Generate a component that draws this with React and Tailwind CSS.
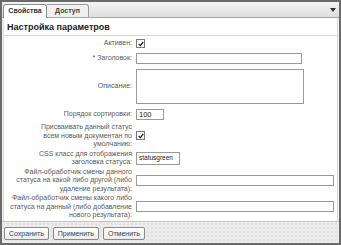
import React from "react";

const Label = ({ children, className = "" }) => (
  <div className={`w-[128px] shrink-0 text-right text-[7px] leading-[8.5px] text-[#5a5a5a] ${className}`}>
    {children}
  </div>
);

const Check = () => (
  <span className="w-[9px] h-[9px] border border-[#7a7a7a] bg-white flex items-center justify-center">
    <svg width="6" height="6" viewBox="0 0 6 6">
      <path d="M0.8 3 L2.4 4.6 L5.2 1" stroke="#222" strokeWidth="1.3" fill="none" />
    </svg>
  </span>
);

const Input = ({ className = "", value = "", small = false }) => (
  <div
    className={`border border-[#9a9a9a] bg-white ${small ? "text-[6.5px]" : "text-[7.5px]"} text-[#222] pl-[2px] flex items-center overflow-hidden whitespace-nowrap ${className}`}
  >
    {value}
  </div>
);

const Button = ({ children }) => (
  <button className="h-[13px] px-[4px] border border-[#8a8a8a] rounded-[2px] bg-gradient-to-b from-white to-[#ececec] text-[7px] leading-[11px] text-[#444]">
    {children}
  </button>
);

export default function App() {
  return (
    <div className="w-[341px] h-[245px] flex flex-col border-2 border-[#6a6a6a] bg-[#f2f2f2] overflow-hidden font-['Liberation_Sans',Arial,sans-serif]">
      {/* Tabs */}
      <div className="relative h-[16px] shrink-0 flex items-end pl-[1px] bg-gradient-to-b from-[#f4f4f4] to-[#dedede] border-b border-[#a8a8a8]">
        <div className="h-[14px] w-[44px] flex items-center justify-center bg-white border border-b-0 border-[#8c8c8c] rounded-t-[3px] text-[7px] font-bold text-[#333] -mb-px">
          Свойства
        </div>
        <div className="h-[13px] w-[42px] flex items-center justify-center bg-[#f0f0f0] border border-l-0 border-b-0 border-[#9c9c9c] rounded-tr-[3px] text-[7px] font-bold text-[#444]">
          Доступ
        </div>
        <svg className="absolute right-[3px] top-[6px]" width="6" height="4" viewBox="0 0 6 4">
          <path d="M0 0 H6 L3 4 Z" fill="#333" />
        </svg>
      </div>

      {/* Content */}
      <div className="flex-1 bg-white border-l border-r border-[#dcdcdc] mx-px flex flex-col">
        <div className="h-[18px] shrink-0 flex items-center pl-[3px] pt-[2px] border-b border-[#d8d8d8] text-[9px] text-[#222] font-bold">
          Настройка параметров
        </div>

        <div className="flex flex-col pt-[3px]">
          <div className="flex items-center gap-[4px] h-[9px]">
            <Label>Активен:</Label>
            <Check />
          </div>
          <div className="flex items-center gap-[4px] mt-[5px]">
            <Label>* Заголовок:</Label>
            <Input className="w-[166px] h-[11px]" />
          </div>
          <div className="flex items-center gap-[4px] mt-[5px]">
            <Label>Описание:</Label>
            <Input className="w-[168px] h-[35px]" />
          </div>
          <div className="flex items-center gap-[4px] mt-[5px]">
            <Label>Порядок сортировки:</Label>
            <Input className="w-[28px] h-[11px]" value="100" />
          </div>
          <div className="flex items-center gap-[4px] mt-[3px]">
            <Label>
              Присваивать данный статус
              <br />
              всем новым документан по
              <br />
              умолчанию:
            </Label>
            <Check />
          </div>
          <div className="flex items-center gap-[4px] mt-[1px]">
            <Label>
              CSS класс для отображения
              <br />
              заголовка статуса:
            </Label>
            <Input className="w-[44px] h-[13px]" value="statusgreen" small />
          </div>
          <div className="flex items-center gap-[4px] mt-[1px]">
            <Label>
              Файл-обработчик смены данного
              <br />
              статуса на какой либо другой (либо
              <br />
              удаление результата):
            </Label>
            <Input className="w-[198px] h-[11px]" />
          </div>
          <div className="flex items-center gap-[4px] mt-[1px]">
            <Label>
              Файл-обработчик смены какого либо
              <br />
              статуса на данный (либо добавление
              <br />
              нового результата):
            </Label>
            <Input className="w-[198px] h-[11px]" />
          </div>
        </div>
      </div>

      {/* Footer */}
      <div className="h-[22px] shrink-0 flex items-center gap-[4px] pl-[2px] pt-[2px] border-t border-[#c4c4c4] bg-[#ececec] bg-[radial-gradient(#e0e0e0_1px,transparent_1px)] bg-[length:4px_4px]">
        <Button>Сохранить</Button>
        <Button>Применить</Button>
        <Button>Отменить</Button>
      </div>
    </div>
  );
}
